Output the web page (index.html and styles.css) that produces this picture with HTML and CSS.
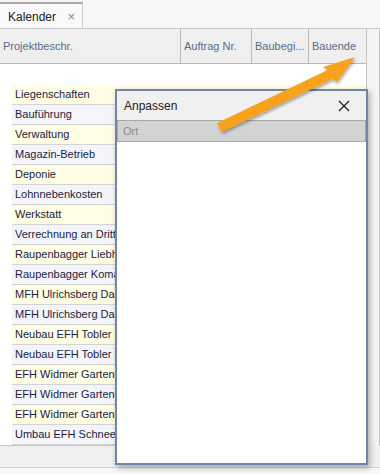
FILE: index.html
```html
<!DOCTYPE html>
<html lang="de">
<head>
<meta charset="UTF-8">
<meta name="viewport" content="width=device-width, initial-scale=1.0">
<title>Kalender</title>
<link rel="stylesheet" href="styles.css">
</head>
<body>
<div class="page">
  <div class="tabs">
    <div class="tab">Kalender <span class="tab-close">×</span></div>
  </div>

  <div class="main">
    <div class="grid">
      <div class="grid-head">
        <div class="col c1">Projektbeschr.</div>
        <div class="col c2">Auftrag Nr.</div>
        <div class="col c3">Baubegi...</div>
        <div class="col c4">Bauende</div>
      </div>
      <div class="filter-row"></div>
      <div class="rows">
        <div class="row odd"><span>Liegenschaften</span></div>
        <div class="row even"><span>Bauführung</span></div>
        <div class="row odd"><span>Verwaltung</span></div>
        <div class="row even"><span>Magazin-Betrieb</span></div>
        <div class="row odd"><span>Deponie</span></div>
        <div class="row even"><span>Lohnnebenkosten</span></div>
        <div class="row odd"><span>Werkstatt</span></div>
        <div class="row even"><span>Verrechnung an Dritte</span></div>
        <div class="row odd"><span>Raupenbagger Liebherr</span></div>
        <div class="row even"><span>Raupenbagger Komatsu</span></div>
        <div class="row odd"><span>MFH Ulrichsberg Dach</span></div>
        <div class="row even"><span>MFH Ulrichsberg Dach</span></div>
        <div class="row odd"><span>Neubau EFH Tobler B</span></div>
        <div class="row even"><span>Neubau EFH Tobler B</span></div>
        <div class="row odd"><span>EFH Widmer Gartenbau</span></div>
        <div class="row even"><span>EFH Widmer Gartenbau</span></div>
        <div class="row odd"><span>EFH Widmer Gartenbau</span></div>
        <div class="row even"><span>Umbau EFH Schneeberger</span></div>
      </div>
    </div>
    <div class="side"></div>
  </div>

  <div class="footer-bar"></div>
  <div class="footer-rest"></div>

  <!-- Anpassen Dialog -->
  <div class="dialog">
    <div class="dialog-title">
      <span>Anpassen</span>
      <svg class="dialog-close" width="12" height="12" viewBox="0 0 12 12">
        <path d="M1 1 L11 11 M11 1 L1 11" stroke="#222" stroke-width="1.3" fill="none"/>
      </svg>
    </div>
    <div class="dialog-item">Ort</div>
  </div>

  <svg class="arrow" width="380" height="474" viewBox="0 0 380 474">
    <defs>
      <filter id="sh" x="-10%" y="-10%" width="130%" height="130%">
        <feDropShadow dx="1" dy="2" stdDeviation="1.5" flood-color="#000" flood-opacity="0.35"/>
      </filter>
    </defs>
    <polygon filter="url(#sh)" fill="#f7a11c"
      points="217.2,123 327.7,70 323,67 355,57 337,82 332.3,79 221.8,132"/>
  </svg>
</div>
</body>
</html>
```

FILE: styles.css
```css
* {
  margin: 0;
  padding: 0;
  box-sizing: border-box;
}
body {
  font-family: "Liberation Sans", Arial, sans-serif;
  font-size: 11px;
  background-color: #f7f7f7;
}
.page {
  position: relative;
  width: 380px;
  height: 474px;
  overflow: hidden;
}
.tabs {
  height: 29px;
  padding-top: 2px;
  background-color: #f7f7f7;
  border-bottom: 1px solid #c9c9c9;
}
.tab {
  width: 83px;
  height: 26px;
  padding: 5px 0 0 8px;
  border-top: 2px solid #a9a9a9;
  border-right: 1px solid #c9c9c9;
  background-color: #f9f9f9;
  color: #222;
  font-size: 12px;
}
.tab-close {
  margin-left: 8px;
  color: #888;
  font-size: 13px;
}
.main {
  display: flex;
  height: 417px;
}
.grid {
  width: 367px;
  background-color: #fff;
  border-right: 1px solid #c4c4c4;
  border-bottom: 1px solid #c4c4c4;
}
.grid-head {
  display: flex;
  height: 35px;
  background-color: #efefef;
  border-bottom: 1px solid #b9b9b9;
}
.col {
  padding: 11px 0 0 3px;
  color: #5b6a8a;
  border-right: 1px solid #b9b9b9;
}
.c1 { width: 181px; }
.c2 { width: 71px; }
.c3 { width: 57px; }
.c4 { width: 57px; border-right: none; }
.filter-row {
  height: 21px;
  background-color: #fff;
}
.rows {
  padding-left: 12px;
}
.row {
  height: 20px;
  padding: 3px 0 0 3px;
  border-bottom: 1px solid #d3d3d3;
  color: #1c1c3c;
  white-space: nowrap;
  overflow: hidden;
}
.odd { background-color: #fffde4; }
.even { background-color: #f4f5fb; }
.side {
  width: 13px;
  background-color: #f4f4f4;
  border-right: 1px solid #c4c4c4;
}
.footer-bar {
  height: 22px;
  background-color: #f0f0f0;
  border-bottom: 1px solid #d4d4d4;
}
.footer-rest {
  height: 6px;
  background-color: #f8f8f8;
}
.dialog {
  position: absolute;
  left: 115px;
  top: 89px;
  width: 253px;
  height: 376px;
  background-color: #fff;
  border: 2px solid #7086a6;
  box-shadow: 2px 3px 6px rgba(0, 0, 0, 0.3);
}
.dialog-title {
  display: flex;
  justify-content: space-between;
  align-items: center;
  height: 29px;
  padding: 0 16px 0 7px;
  background-color: #f0f0f0;
  color: #222;
  font-size: 12px;
}
.dialog-item {
  height: 22px;
  padding: 4px 0 0 5px;
  background-color: #d3d3d3;
  border: 1px solid #a8a8a8;
  color: #8a8a8a;
}
.arrow {
  position: absolute;
  left: 0;
  top: 0;
}
```
